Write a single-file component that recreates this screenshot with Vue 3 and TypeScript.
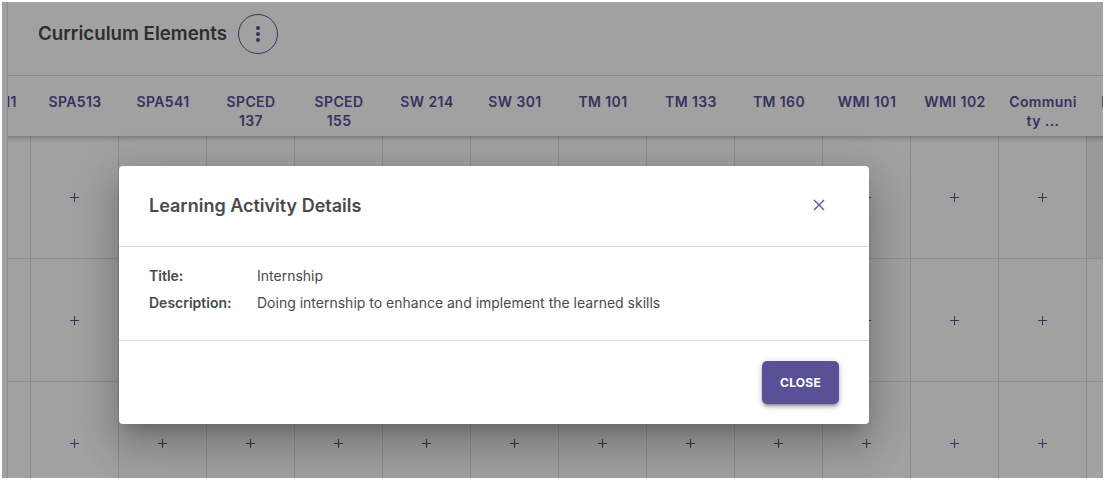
<script setup lang="ts">
const columns: string[] = [
  'SOM 411', 'SPA513', 'SPA541', 'SPCED 137', 'SPCED 155', 'SW 214', 'SW 301',
  'TM 101', 'TM 133', 'TM 160', 'WMI 101', 'WMI 102', 'Community ...', 'Industry'
]
const rows: number[] = [0, 1, 2]
</script>

<template>
  <div class="frame">
    <aside class="rail"></aside>
    <main class="main">
      <header class="topbar">
        <h1 class="heading">Curriculum Elements</h1>
        <button class="more" type="button" aria-label="More">
          <svg width="24" height="24" viewBox="0 0 24 24" fill="currentColor">
            <circle cx="12" cy="6" r="2" />
            <circle cx="12" cy="12" r="2" />
            <circle cx="12" cy="18" r="2" />
          </svg>
        </button>
      </header>
      <div class="table">
        <div class="head-row">
          <div v-for="c in columns" :key="c" class="head-cell">{{ c }}</div>
        </div>
        <div v-for="r in rows" :key="r" class="row">
          <div
            v-for="(c, i) in columns"
            :key="c"
            class="cell"
            :class="{ hovered: r === 0 && i === columns.length - 1 }"
          >
            <svg width="9" height="9" viewBox="0 0 9 9" stroke="currentColor" fill="none">
              <path d="M0 4.5H9M4.5 0V9" />
            </svg>
          </div>
        </div>
      </div>
    </main>

    <div class="overlay">
      <section class="dialog">
        <div class="dialog-head">
          <h2 class="dialog-title">Learning Activity Details</h2>
          <button class="x" type="button" aria-label="Close">
            <svg width="12" height="12" viewBox="0 0 12 12" stroke="currentColor" stroke-width="1.3" fill="none">
              <path d="M1 1L11 11M11 1L1 11" />
            </svg>
          </button>
        </div>
        <div class="dialog-body">
          <div class="line"><span class="label">Title:</span><span>Internship</span></div>
          <div class="line"><span class="label">Description:</span><span>Doing internship to enhance and implement the learned skills</span></div>
        </div>
        <div class="dialog-foot">
          <button class="close" type="button">CLOSE</button>
        </div>
      </section>
    </div>
  </div>
</template>

<style>
html, body { margin: 0; background: #fff; }
</style>

<style scoped>
.frame {
  position: relative;
  display: flex;
  box-sizing: border-box;
  width: 1101px;
  height: 476px;
  margin: 2px 2px 2px 2px;
  overflow: hidden;
  background: #fff;
  font-family: Inter, "Liberation Sans", sans-serif;
  color: #4a4a4a;
}
.rail {
  flex: none;
  width: 5px;
  border-right: 1px solid #e0e0e0;
}
.main {
  flex: 1;
  min-width: 0;
  overflow: hidden;
}
.topbar {
  display: flex;
  align-items: center;
  gap: 11px;
  height: 74px;
  padding-left: 30px;
  padding-bottom: 10px;
  box-sizing: border-box;
  border-bottom: 1px solid #e0e0e0;
}
.heading {
  margin: 0;
  font-size: 18.72px;
  font-weight: 600;
  line-height: 24px;
}
.more {
  display: flex;
  align-items: center;
  justify-content: center;
  width: 40px;
  height: 40px;
  padding: 0;
  border: 1px solid #5a5096;
  border-radius: 50%;
  background: transparent;
  color: #5a5096;
}
.table {
  width: max-content;
  margin-left: -65px;
}
.head-row {
  position: relative;
  z-index: 1;
  display: flex;
  height: 60px;
  box-shadow: 0 2px 4px rgba(0, 0, 0, 0.25);
  background: #fff;
}
.head-cell {
  box-sizing: border-box;
  width: 88px;
  padding: 16px 9.5px 0;
  font-size: 14px;
  font-weight: 600;
  letter-spacing: 0.4px;
  line-height: 19px;
  text-align: center;
  color: #5a5096;
  overflow-wrap: anywhere;
}
.row {
  display: flex;
  height: 123px;
  box-sizing: border-box;
  border-bottom: 1px solid #e0e0e0;
}
.cell {
  box-sizing: border-box;
  width: 88px;
  display: flex;
  align-items: center;
  justify-content: center;
  border-right: 1px solid #e0e0e0;
  color: #5a5096;
}
.hovered {
  background: #f2f2f2;
}
.overlay {
  position: absolute;
  inset: 0;
  z-index: 5;
  box-sizing: border-box;
  padding: 164px 0 0 117px;
  background: rgba(0, 0, 0, 0.37);
}
.dialog {
  width: 750px;
  height: 258px;
  display: flex;
  flex-direction: column;
  border-radius: 4px;
  background: #fff;
  box-shadow: 0 11px 15px -7px rgba(0, 0, 0, 0.2), 0 24px 38px 3px rgba(0, 0, 0, 0.14), 0 9px 46px 8px rgba(0, 0, 0, 0.12);
}
.dialog-head {
  display: flex;
  align-items: center;
  justify-content: space-between;
  height: 81px;
  box-sizing: border-box;
  padding: 0 44px 2px 30px;
  border-bottom: 1px solid #dcdcdc;
}
.dialog-title {
  margin: 0;
  font-size: 18px;
  font-weight: 600;
}
.x {
  display: flex;
  padding: 0;
  border: 0;
  background: none;
  color: #5a5096;
}
.dialog-body {
  display: flex;
  flex-direction: column;
  gap: 8px;
  height: 94px;
  box-sizing: border-box;
  padding: 19px 30px 0;
  border-bottom: 1px solid #dcdcdc;
  font-size: 14px;
  line-height: 19px;
}
.line {
  display: flex;
}
.label {
  width: 108px;
  font-weight: 600;
}
.dialog-foot {
  flex: 1;
  display: flex;
  justify-content: flex-end;
  align-items: flex-start;
  padding: 20px 30px 0 0;
}
.close {
  width: 77px;
  height: 43px;
  border: 0;
  border-radius: 5px;
  background: #5a5096;
  color: #fff;
  font-family: inherit;
  font-size: 12px;
  font-weight: 700;
  letter-spacing: 0.25px;
  box-shadow: 0 3px 3px -2px rgba(0, 0, 0, 0.3), 0 3px 4px rgba(0, 0, 0, 0.2), 0 1px 8px rgba(0, 0, 0, 0.15);
}
</style>
